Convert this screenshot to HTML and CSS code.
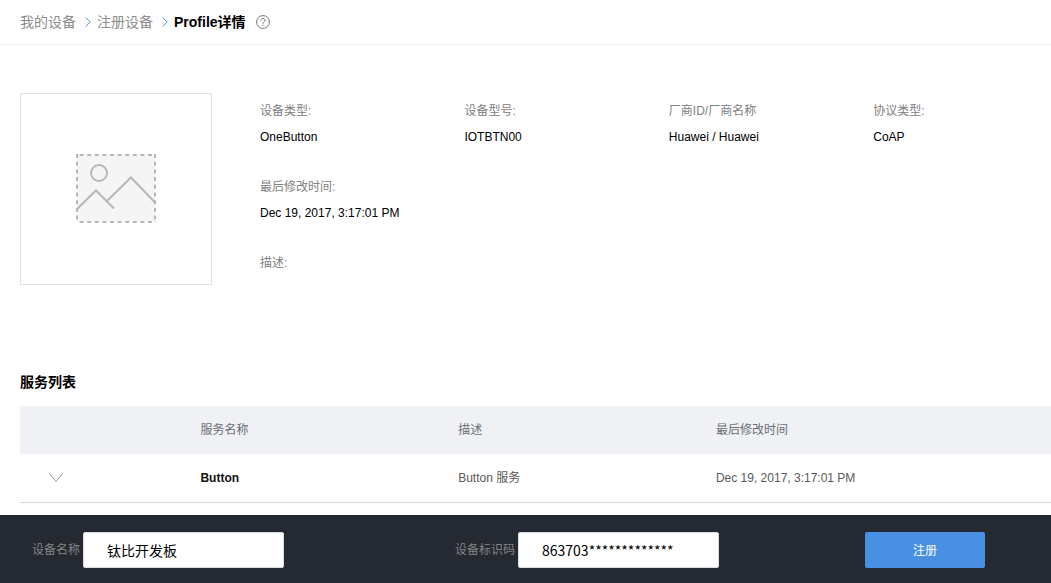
FILE: index.html
```html
<!DOCTYPE html>
<html lang="zh-CN">
<head>
<meta charset="utf-8">
<meta name="viewport" content="width=device-width, initial-scale=1">
<title>Profile详情</title>
<link rel="stylesheet" href="styles.css">
</head>
<body>
<header class="topbar">
  <nav class="breadcrumb" aria-label="breadcrumb">
    <a class="crumb" href="#">我的设备</a>
    <svg class="crumb-sep" viewBox="0 0 6 10" aria-hidden="true"><path d="M.7.5 5.2 5 .7 9.5"/></svg>
    <a class="crumb" href="#">注册设备</a>
    <svg class="crumb-sep" viewBox="0 0 6 10" aria-hidden="true"><path d="M.7.5 5.2 5 .7 9.5"/></svg>
    <h1 class="crumb-current">Profile详情</h1>
  </nav>
  <button class="help" type="button" aria-label="帮助">
    <svg class="help-icon" viewBox="0 0 14 14" aria-hidden="true">
      <circle cx="7" cy="7" r="6.4"/>
      <path d="M4.9 5.5C4.9 4.2 5.8 3.4 7 3.4s2.1.8 2.1 1.9C9.1 6.8 7 6.9 7 8.7M7 9.7v1.2"/>
    </svg>
  </button>
</header>

<main class="content">
  <section class="profile">
    <div class="thumb">
      <svg class="thumb-icon" viewBox="0 0 80 70" aria-hidden="true">
        <rect class="thumb-fill" x="1" y="1" width="78" height="67"/>
        <path class="thumb-dash" stroke-dasharray="4 3.6" stroke-dashoffset="4" d="M0 1h80M0 68h80"/>
        <path class="thumb-dash" stroke-dasharray="4 3.7" d="M1 0v69M79 0v69"/>
        <circle class="thumb-line" cx="23" cy="19" r="8"/>
        <path class="thumb-line" d="M1 55 20 36.500l18 18M31 47l24-23.500 24 25"/>
      </svg>
    </div>
    <dl class="details">
      <div class="detail"><dt class="term">设备类型:</dt><dd class="value">OneButton</dd></div>
      <div class="detail"><dt class="term">设备型号:</dt><dd class="value">IOTBTN00</dd></div>
      <div class="detail"><dt class="term">厂商ID/厂商名称</dt><dd class="value">Huawei / Huawei</dd></div>
      <div class="detail"><dt class="term">协议类型:</dt><dd class="value">CoAP</dd></div>
      <div class="detail detail-wide"><dt class="term">最后修改时间:</dt><dd class="value">Dec 19, 2017, 3:17:01 PM</dd></div>
      <div class="detail detail-wide"><dt class="term">描述:</dt><dd class="value"></dd></div>
    </dl>
  </section>

  <section class="services">
    <h2 class="section-title">服务列表</h2>
    <table class="table">
      <thead>
        <tr><th class="col-toggle"></th><th class="col-name">服务名称</th><th class="col-desc">描述</th><th>最后修改时间</th></tr>
      </thead>
      <tbody>
        <tr>
          <td class="col-toggle">
            <button class="toggle" type="button" aria-label="展开">
              <svg class="toggle-icon" viewBox="0 0 14 10" aria-hidden="true"><path d="M.5.700 7 8.500 13.500.7"/></svg>
            </button>
          </td>
          <td class="service-name">Button</td>
          <td>Button 服务</td>
          <td>Dec 19, 2017, 3:17:01 PM</td>
        </tr>
      </tbody>
    </table>
  </section>
</main>

<footer class="footer">
  <form class="register">
    <div class="field">
      <label class="label" for="device-name">设备名称</label>
      <input class="input" id="device-name" type="text" value="钛比开发板">
    </div>
    <div class="field">
      <label class="label" for="device-code">设备标识码</label>
      <input class="input" id="device-code" type="text" value="863703*************">
    </div>
    <button class="submit" type="button">注册</button>
  </form>
</footer>
</body>
</html>
```

FILE: styles.css
```css
* { box-sizing: border-box; }

body {
  display: flex;
  flex-direction: column;
  min-height: 100vh;
  margin: 0;
  background: #fff;
  color: #000;
  font: 12px/18px "Liberation Sans", "Noto Sans CJK SC", sans-serif;
}

/* Header */
.topbar {
  display: flex;
  align-items: center;
  gap: 10px;
  height: 45px;
  padding: 0 20px;
  border-bottom: 1px solid #efefef;
}
.breadcrumb {
  display: flex;
  align-items: center;
  gap: 6px;
  font-size: 14px;
  line-height: 20px;
}
.crumb { color: #8c8c8c; text-decoration: none; }
.crumb-sep {
  width: 6px;
  height: 10px;
  margin-left: 3px;
  fill: none;
  stroke: #4a90e2;
}
.crumb-current { margin: 0; font-size: 14px; line-height: 20px; }
.help { display: flex; padding: 0; border: 0; background: none; }
.help-icon { width: 14px; height: 14px; fill: none; stroke: #777; }

/* Profile summary */
.content { flex: 1; padding-left: 20px; }
.profile { display: flex; align-items: flex-start; gap: 48px; padding-top: 48px; }
.thumb {
  display: flex;
  flex: none;
  align-items: center;
  justify-content: center;
  width: 192px;
  height: 192px;
  border: 1px solid #e2e2e2;
}
.thumb-icon { width: 80px; height: 70px; }
.thumb-fill { fill: #f5f5f5; }
.thumb-dash, .thumb-line { fill: none; stroke: #b7b7b7; stroke-width: 2; }

.details {
  display: grid;
  flex: 1;
  grid-template-columns: repeat(3, minmax(0, 23fr)) minmax(0, 20fr);
  align-content: start;
  row-gap: 32px;
  margin: 0;
  padding-top: 9px;
}
.detail-wide { grid-column: 1 / -1; }
.term { color: #808080; }
.value { min-height: 18px; margin: 8px 0 0; }

/* Service list */
.services { padding-top: 73px; }
.section-title { margin: 0; font-size: 14px; line-height: 22px; }
.table {
  width: 100%;
  margin-top: 13px;
  border-collapse: collapse;
  table-layout: fixed;
  color: #595959;
}
.table th, .table td { height: 48px; padding: 0; text-align: left; font-weight: 400; }
.table th { background: #eff1f5; color: #6b6e73; }
.table td { border-bottom: 1px solid #d9d9d9; }
.table .col-toggle { width: 17.5%; padding-left: 29px; }
.col-name, .col-desc { width: 25%; }
.table .service-name { color: #111; font-weight: 700; }
.toggle { display: flex; padding: 0; border: 0; background: none; }
.toggle-icon { width: 14px; height: 10px; fill: none; stroke: #999; }

/* Registration bar */
.footer { padding: 17px 66px 15px 32px; background: #252932; }
.register {
  display: grid;
  grid-template-columns: 423fr 410fr 120px;
  align-items: center;
}
.field { display: flex; align-items: center; gap: 3px; }
.label { color: #858585; }
.input {
  width: 201px;
  height: 36px;
  padding: 0 23px;
  border: 1px solid #d9dce3;
  border-radius: 2px;
  background: #fff;
  color: #000;
  font: 14px/20px "Noto Sans CJK SC", sans-serif;
}
.submit {
  height: 36px;
  border: 0;
  border-radius: 2px;
  background: #4a90e2;
  color: #fff;
  font: 12px/18px "Noto Sans CJK SC", sans-serif;
}
```
